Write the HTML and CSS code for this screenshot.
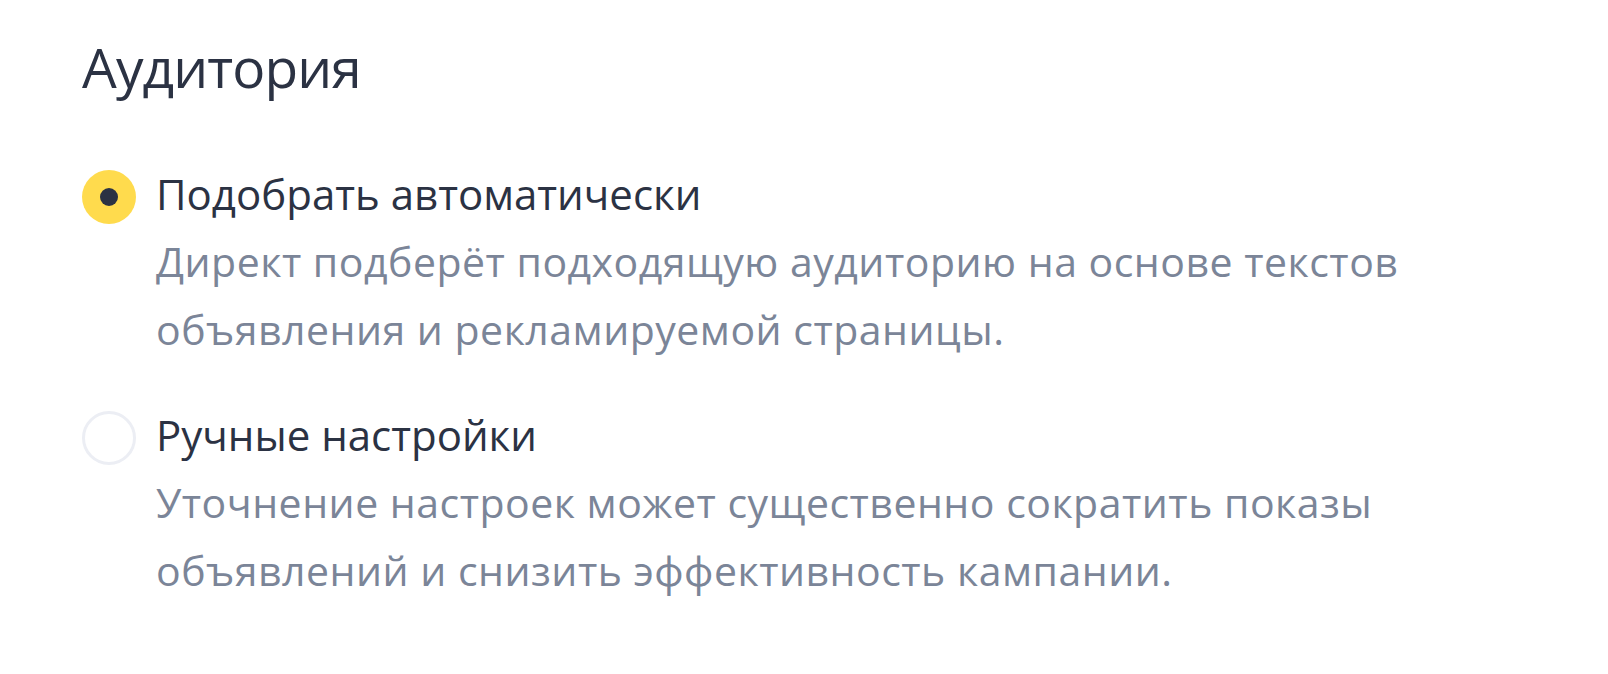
FILE: index.html
```html
<!DOCTYPE html>
<html lang="ru">
<head>
    <meta charset="UTF-8">
    <meta name="viewport" content="width=device-width, initial-scale=1.0">
    <title>Аудитория</title>
    <link rel="stylesheet" href="styles.css">
</head>
<body>

    <section class="audience">
        <h2 class="audience-title">Аудитория</h2>

        <div class="radio-group">
            <!-- Auto targeting -->
            <label class="radio radio-checked">
                <span class="radio-box"></span>
                <span class="radio-text">
                    <span class="radio-label">Подобрать автоматически</span>
                    <span class="radio-hint">Директ подберёт подходящую аудиторию на основе текстов объявления и рекламируемой страницы.</span>
                </span>
            </label>

            <!-- Manual targeting -->
            <label class="radio">
                <span class="radio-box"></span>
                <span class="radio-text">
                    <span class="radio-label">Ручные настройки</span>
                    <span class="radio-hint">Уточнение настроек может существенно сократить показы объявлений и снизить эффективность кампании.</span>
                </span>
            </label>
        </div>
    </section>

</body>
</html>
```

FILE: styles.css
```css
body {
    margin: 0;
    font-family: 'Open Sans', 'Noto Sans', sans-serif;
    background: white;
    color: #2b3243;
}

.audience {
    padding: 33px 0 0 82px;
}

.audience-title {
    margin: 0;
    font-size: 55px;
    font-weight: 400;
    line-height: 68px;
    letter-spacing: -0.9px;
}

.radio-group {
    display: flex;
    flex-direction: column;
    gap: 39px;
    margin-top: 60px;
}

.radio {
    display: flex;
    align-items: flex-start;
    gap: 20px;
    cursor: pointer;
}

.radio-box {
    flex: none;
    box-sizing: border-box;
    width: 54px;
    height: 54px;
    margin-top: 9px;
    border-radius: 50%;
    border: 3px solid #eceef4;
    background: white;
    position: relative;
}

.radio-checked .radio-box {
    border: none;
    background: #ffdb4d;
}

.radio-checked .radio-box::after {
    content: "";
    position: absolute;
    left: 18px;
    top: 18px;
    width: 18px;
    height: 18px;
    border-radius: 50%;
    background: #2b3243;
}

.radio-text {
    display: flex;
    flex-direction: column;
    max-width: 1270px;
}

.radio-label {
    font-size: 42px;
    line-height: 66px;
}

.radio-hint {
    font-size: 41px;
    line-height: 68px;
    letter-spacing: 0.5px;
    color: #7b8598;
}
```
